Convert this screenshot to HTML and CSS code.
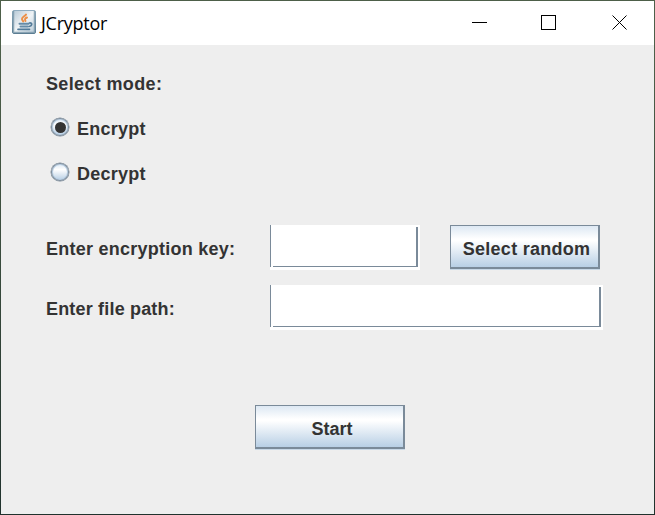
FILE: index.html
```html
<!DOCTYPE html>
<html lang="en">
<head>
<meta charset="utf-8">
<title>JCryptor</title>
<link rel="stylesheet" href="styles.css">
</head>
<body>
<div class="window">
  <header class="titlebar">
    <svg class="app-icon" width="24" height="24" viewBox="0 0 24 24">
      <defs><linearGradient id="tile" x1="0" y1="0" x2="0" y2="1"><stop offset="0" stop-color="#8facbf"/><stop offset="1" stop-color="#56798f"/></linearGradient>
      <linearGradient id="face" x1="0" y1="0" x2="1" y2="1"><stop offset="0" stop-color="#b5c8d5"/><stop offset=".5" stop-color="#f0f4f7"/><stop offset="1" stop-color="#b5c8d5"/></linearGradient></defs>
      <rect x=".5" y=".5" width="23" height="23" rx="1.5" fill="url(#face)" stroke="url(#tile)"/>
      <path d="M1.500 1v22M22.500 1v22M1 22.500h22" stroke="#7896a9" stroke-width="1.500" opacity=".8"/>
      <g fill="none" stroke-linecap="round">
        <path d="M14 4.500c-1 1.800-4 2.300-4 4.500 0 1 1 1.500 1.200 2.500M15 7.500c-2 .8-2.500 1.800-1.500 3.500" stroke="#ec9048" stroke-width="2"/>
        <path d="M7.500 13.800h9M8.500 16.500h7" stroke="#658ba7" stroke-width="2"/>
        <path d="M17.500 13c3-.6 3 2.800-.5 3.500M6 19.300h11.500" stroke="#527b99" stroke-width="1.700"/>
      </g>
    </svg>
    <span class="title">JCryptor</span>
    <svg class="controls" width="156" height="16" viewBox="0 0 156 16" fill="none" stroke="#000">
      <path d="M0 7.500h15"/>
      <rect x="69.500" y=".5" width="14" height="14"/>
      <path d="M140.500 .5l14 14M154.500 .5l-14 14"/>
    </svg>
  </header>
  <main class="content">
    <div class="row heading"><span class="text">Select mode:</span></div>
    <label class="row option"><span class="radio radio-on"></span><span class="text">Encrypt</span></label>
    <label class="row option"><span class="radio"></span><span class="text">Decrypt</span></label>
    <div class="row key-row">
      <span class="caption text">Enter encryption key:</span>
      <span class="field field-key"></span>
      <span class="button"><span class="text">Select random</span></span>
    </div>
    <div class="row path-row">
      <span class="caption text">Enter file path:</span>
      <span class="field field-path"></span>
    </div>
    <div class="start-row"><span class="button button-start"><span class="text">Start</span></span></div>
  </main>
</div>
</body>
</html>
```
FILE: styles.css
```css
* { box-sizing: border-box; }
body { margin: 0; }
.window {
  width: 655px;
  height: 515px;
  padding: 1px;
  background: linear-gradient(#4d5f49, #4d5f49 10%, #20322d);
}
.titlebar {
  height: 44px;
  padding: 0 26px 0 11px;
  display: flex;
  align-items: center;
  background: #fff;
}
.app-icon { margin-top: -2px; }
.title {
  margin-left: 5px;
  font: 18px/24px "Open Sans", "Noto Sans", sans-serif;
  letter-spacing: -0.25px;
  color: #000;
}
.controls { margin-left: auto; }
.content {
  height: 469px;
  padding: 15px 0 0 45px;
  background: #eee;
  color: #333;
  font: bold 18px/21px "Liberation Sans", Arial, sans-serif;
  letter-spacing: 0.25px;
}
.row {
  height: 45px;
  display: flex;
  align-items: center;
}
.heading { letter-spacing: 0.35px; }
.text { padding-top: 3px; white-space: nowrap; }
.option { padding-left: 5px; }
.radio {
  position: relative;
  width: 18px;
  height: 18px;
  margin: 0 8px 1px 0;
  border: 1px solid #7a8a99;
  border-radius: 50%;
  background: linear-gradient(#dce8f3, #fff 35%, #b8cfe5);
  box-shadow: inset 0 0 0 1px #b8cfe5, 0 0 0 0.500px #7a8a99;
}
.radio-on::after {
  content: "";
  position: absolute;
  inset: 2.500px;
  border-radius: 50%;
  background: #333;
}
.key-row { margin-top: 30px; }
.path-row { margin-top: 15px; }
.path-row .caption { letter-spacing: 0.18px; }
.caption { width: 224px; }
.field {
  position: relative;
  height: 45px;
  background: #fff;
}
.field-key { width: 150px; margin-right: 30px; }
.field-path { width: 333px; }
.field::before {
  content: "";
  position: absolute;
  left: 0;
  top: 0;
  width: 1px;
  height: 42px;
  background: #7a8a99;
}
.field::after {
  content: "";
  position: absolute;
  left: 3px;
  top: 2px;
  right: 2px;
  bottom: 3px;
  border: solid #7a8a99;
  border-width: 0 2px 1px 0;
}
.button {
  width: 150px;
  height: 44px;
  margin-bottom: 1px;
  padding: 2px 0 0 4px;
  display: flex;
  align-items: center;
  justify-content: center;
  border: solid #7a8a99;
  border-width: 1px 2px 2px 1px;
  background: linear-gradient(#dde8f3, #fff 32%, #fff 36%, #b8cfe5);
  box-shadow: 0 1px #c8d8e7;
}
.button-start { padding-left: 5px; letter-spacing: 0; }
.start-row {
  margin: 75px 0 0 209px;
}
```
